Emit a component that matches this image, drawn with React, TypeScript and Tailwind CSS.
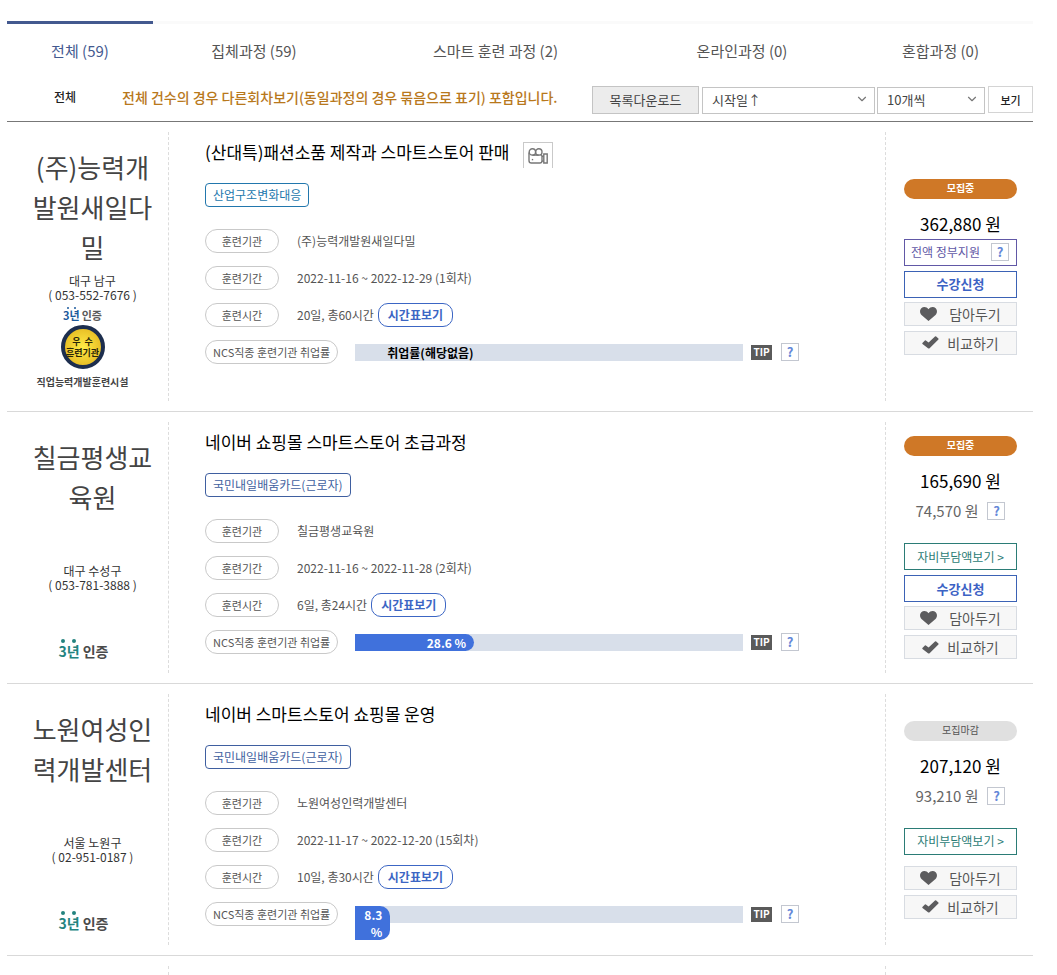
import { useState } from "react";
import { FiChevronDown } from "react-icons/fi";

type Course = {
  id: number;
  org: string;
  place: string;
  phone: string;
  title: string;
  video?: boolean;
  tag: string;
  tagTone: "sky" | "navy";
  period: string;
  hours: string;
  rate?: number;
  open: boolean;
  price: string;
  ownPrice?: string;
  excellent?: boolean;
};

const tabs = ["전체 (59)", "집체과정 (59)", "스마트 훈련 과정 (2)", "온라인과정 (0)", "혼합과정 (0)"];

const courses: Course[] = [
  {
    id: 1,
    org: "(주)능력개발원새일다밀",
    place: "대구 남구",
    phone: "( 053-552-7676 )",
    title: "(산대특)패션소품 제작과 스마트스토어 판매",
    video: true,
    tag: "산업구조변화대응",
    tagTone: "sky",
    period: "2022-11-16 ~ 2022-12-29 (1회차)",
    hours: "20일, 총60시간",
    open: true,
    price: "362,880 원",
    excellent: true,
  },
  {
    id: 2,
    org: "칠금평생교육원",
    place: "대구 수성구",
    phone: "( 053-781-3888 )",
    title: "네이버 쇼핑몰 스마트스토어 초급과정",
    tag: "국민내일배움카드(근로자)",
    tagTone: "navy",
    period: "2022-11-16 ~ 2022-11-28 (2회차)",
    hours: "6일, 총24시간",
    rate: 28.6,
    open: true,
    price: "165,690 원",
    ownPrice: "74,570 원",
  },
  {
    id: 3,
    org: "노원여성인력개발센터",
    place: "서울 노원구",
    phone: "( 02-951-0187 )",
    title: "네이버 스마트스토어 쇼핑몰 운영",
    tag: "국민내일배움카드(근로자)",
    tagTone: "navy",
    period: "2022-11-17 ~ 2022-12-20 (15회차)",
    hours: "10일, 총30시간",
    rate: 8.3,
    open: false,
    price: "207,120 원",
    ownPrice: "93,210 원",
  },
];

function HelpButton() {
  return (
    <button
      type="button"
      aria-label="도움말"
      className="flex h-[18px] w-[18px] shrink-0 items-center justify-center border border-[#c3c7d0] bg-white text-[13px] leading-4 font-bold text-[#6487d8]"
    >
      ?
    </button>
  );
}

function CameraIcon() {
  return (
    <svg viewBox="0 0 20 16" className="h-4 w-5" fill="none" stroke="#777777" strokeWidth="1.4">
      <path d="M1 4.6V12.4Q1 15 3.4 15H11.8Q14 15 14 12.8V8.4Q14 7.4 13.2 6.8" />
      <circle cx="4.4" cy="3.9" r="3.2" />
      <circle cx="10.8" cy="3.9" r="3.2" />
      <path d="M4.4 7.1H10.8" />
      <path d="M14 8.6L15.8 7.8M14 12.8L15.8 13.4" />
      <path d="M15.8 6H19.2V15H15.8Z" />
      <path d="M3.8 11.6H5.2" />
    </svg>
  );
}

function HeartIcon() {
  return (
    <svg viewBox="0 0 17 14" className="h-3.5 w-[17px]" fill="#5c5c5e">
      <path d="M8.5 14L1.5 7.9C-0.4 6 -0.4 2.9 1.3 1.3C3.2 -0.5 6.6 -0.4 8.5 2.2C10.4 -0.4 13.8 -0.5 15.7 1.3C17.4 2.9 17.4 6 15.5 7.9Z" />
    </svg>
  );
}

function CheckIcon() {
  return (
    <svg viewBox="0 0 17 13" className="h-[13px] w-[17px]" fill="#5c5c5e">
      <path d="M0.4 7L2.9 4.4Q3.4 4 3.9 4.4L6.6 6.6L13 0.4Q13.6 0 14.2 0.4L16.4 2.4Q16.9 3 16.4 3.6L7.6 12.2Q6.8 12.9 6 12.2L0.5 8.1Q0 7.5 0.4 7Z" />
    </svg>
  );
}

function Select({ label, options, className }: { label: string; options: string[]; className: string }) {
  return (
    <div className={"relative h-[27px] " + className}>
      <select
        aria-label={label}
        className="h-full w-full appearance-none border border-[#c4c4c4] bg-white pl-[9px] text-[13px] leading-5 text-[#444]"
      >
        {options.map((o) => (
          <option key={o}>{o}</option>
        ))}
      </select>
      <FiChevronDown className="pointer-events-none absolute top-1.5 right-1.5 h-3.5 w-3.5 text-[#777]" strokeWidth={2} />
    </div>
  );
}

function ExcellentMark() {
  return (
    <div className="mr-5 flex h-[89px] flex-col items-center pt-[5px] whitespace-nowrap">
      <div className="flex gap-0.5 text-[11px] leading-4 font-bold">
        <span className="relative text-[#1c5a9c]">
          3년
          <span className="absolute top-0 left-1 h-0.5 w-0.5 rounded-full bg-[#1c5a9c]" />
          <span className="absolute top-0 right-1 h-0.5 w-0.5 rounded-full bg-[#1c5a9c]" />
        </span>
        <span className="text-[#5a5a5a]">인증</span>
      </div>
      <div className="mt-0.5 flex h-11 w-11 flex-col items-center justify-center rounded-full border-4 border-[#1d2e4e] bg-radial from-[#ffec45] to-[#dfae16] text-[9px] leading-[11px] font-bold text-[#2a2608]">
        <span>우&nbsp; 수</span>
        <span>훈련기관</span>
      </div>
      <div className="mt-[5px] text-[10px] leading-4 font-bold text-[#444]">직업능력개발훈련시설</div>
    </div>
  );
}

function CertMark() {
  return (
    <div className="mr-[18px] flex h-[71px] items-end justify-center gap-[3px] pb-0.5 text-sm leading-5 font-bold whitespace-nowrap">
      <span className="relative text-[#24837f]">
        3년
        <span className="absolute -top-0.5 left-0.5 h-1 w-1 rounded-full bg-[#24837f]" />
        <span className="absolute -top-0.5 right-1 h-1 w-1 rounded-full bg-[#24837f]" />
      </span>
      <span className="text-[#4a4a4a]">인증</span>
    </div>
  );
}

function Pill({ children }: { children: string }) {
  return (
    <dt className="flex h-6 min-w-[74px] items-center justify-center rounded-full border border-[#c9c9c9] px-[7px] text-[11px] leading-4 whitespace-nowrap text-[#555]">
      {children}
    </dt>
  );
}

function Row({ label, children }: { label: string; children: React.ReactNode }) {
  return (
    <div className="flex h-6 items-center gap-[18px]">
      <Pill>{label}</Pill>
      <dd className="flex items-center gap-1 text-xs leading-4 text-[#555]">{children}</dd>
    </div>
  );
}

function CourseItem({ c }: { c: Course }) {
  return (
    <li className="flex border-b border-[#d9d9d9]">
      <div className="w-[161px] shrink-0 pt-[25px] pr-[13px] pb-5 pl-[23px] text-center">
        <h3 className="min-h-[121px] text-[26px] leading-10 break-all text-[#444]">{c.org}</h3>
        <p className="mt-1.5 text-xs leading-[14px] whitespace-nowrap text-[#333]">
          {c.place}
          <br />
          {c.phone}
        </p>
        {c.excellent ? <ExcellentMark /> : <CertMark />}
      </div>

      <div className="my-2.5 min-w-0 flex-1 border-x border-dashed border-[#dcdcdc] pt-1.5 pl-9">
        <div className="flex h-7 items-center gap-3.5">
          <a href="#course" className="text-[17px] leading-7 text-black">
            {c.title}
          </a>
          {c.video && (
            <button
              type="button"
              aria-label="동영상 보기"
              className="mt-1.5 flex h-[26px] w-[30px] items-center justify-center border border-b-0 border-[#c9c9c9]"
            >
              <CameraIcon />
            </button>
          )}
        </div>
        <span
          className={
            "mt-[17px] flex h-6 w-fit items-center rounded border px-[7px] text-xs leading-4 " +
            (c.tagTone === "sky" ? "border-[#2277ad] text-[#2277ad]" : "border-[#3f5fa0] text-[#3f5fa0]")
          }
        >
          {c.tag}
        </span>
        <dl className="mt-[22px] flex flex-col gap-[13px]">
          <Row label="훈련기관">{c.org}</Row>
          <Row label="훈련기간">{c.period}</Row>
          <Row label="훈련시간">
            {c.hours}
            <button
              type="button"
              className="h-6 rounded-[10px] border border-[#3c66c4] px-[9px] text-xs leading-4 font-bold text-[#3c66c4]"
            >
              시간표보기
            </button>
          </Row>
          <div className="flex h-6 items-center gap-[17px] pr-[86px]">
            <Pill>NCS직종 훈련기관 취업률</Pill>
            <dd className="flex min-w-0 flex-1 items-center">
              <div className="h-[17px] flex-1 bg-[#d8dfea] text-xs leading-[17px] font-bold">
                {c.rate === undefined ? (
                  <span className="pl-8 text-black">취업률(해당없음)</span>
                ) : (
                  <div
                    className="rounded-r-[10px] bg-[#4071dc] pr-2 pl-1.5 text-right text-white"
                    style={{ width: `calc(${c.rate}% + ${c.rate < 10 ? 3 : 8}px)` }}
                  >
                    {c.rate} %
                  </div>
                )}
              </div>
              <span className="mr-[9px] ml-2 flex h-[15px] w-[21px] items-center justify-center bg-[#5a5a5a] text-[10px] leading-3 font-bold text-white">
                TIP
              </span>
              <HelpButton />
            </dd>
          </div>
        </dl>
      </div>

      <div className="flex w-[147px] shrink-0 flex-col justify-center pr-4 pl-[18px] text-center">
        <span
          className={
            "h-5 rounded-full text-[10px] leading-[18px] " +
            (c.open ? "bg-[#cf7827] font-bold text-white" : "bg-[#e0e0e0] text-[#555]")
          }
        >
          {c.open ? "모집중" : "모집마감"}
        </span>
        <strong className="mt-3 text-[17px] leading-[26px] font-normal text-black">{c.price}</strong>
        {c.ownPrice ? (
          <>
            <div className="mt-[5px] flex h-6 items-center justify-center gap-[9px] text-[15px] leading-6 text-[#666]">
              {c.ownPrice}
              <HelpButton />
            </div>
            <button type="button" className="mt-5 h-[27px] border border-[#2b7c76] text-xs leading-4 text-[#2b7c76]">
              자비부담액보기 &gt;
            </button>
          </>
        ) : (
          <div className="mt-0.5 flex h-[27px] items-center justify-between border border-[#6158a6] pr-[7px] pl-1.5 text-xs leading-4 text-[#6158a6]">
            전액 정부지원
            <HelpButton />
          </div>
        )}
        {c.open && (
          <button type="button" className="mt-[5px] h-[27px] border border-[#3b62b5] text-[13px] leading-5 font-bold text-[#3b62c4]">
            수강신청
          </button>
        )}
        <button
          type="button"
          className={
            "flex h-6 items-center justify-center gap-3 border border-[#d8dce2] bg-[#f7f7f7] text-sm leading-5 text-[#555] " +
            (c.open ? "mt-1" : "mt-[11px]")
          }
        >
          <HeartIcon />
          담아두기
        </button>
        <button
          type="button"
          className="mt-[5px] flex h-6 items-center justify-center gap-2 border border-[#d8dce2] bg-[#f7f7f7] text-sm leading-5 text-[#555]"
        >
          <CheckIcon />
          비교하기
        </button>
      </div>
    </li>
  );
}

export default function App() {
  const [tab, setTab] = useState(0);
  return (
    <main className="overflow-hidden bg-white pt-[21px] pr-6 pl-[7px] font-['Noto_Sans_CJK_KR',sans-serif] text-[#444]">
      <nav className="grid grid-cols-[146fr_202fr_281fr_212fr_185fr]">
        {tabs.map((t, i) => (
          <button
            key={t}
            type="button"
            onClick={() => setTab(i)}
            className={
              "h-[57px] border-t-3 text-[15px] leading-6 " +
              (i === tab ? "border-[#43598f] text-[#43598f]" : "border-[#fafafa] text-[#555]")
            }
          >
            {t}
          </button>
        ))}
      </nav>

      <div className="mt-2 flex items-start border-b border-[#777] pb-[7px]">
        <span className="w-[115px] shrink-0 pl-[47px] text-xs leading-[22px] font-medium text-[#222]">전체</span>
        <p className="flex-1 text-sm leading-[22px] font-medium whitespace-nowrap text-[#b8781c]">
          전체 건수의 경우 다른회차보기(동일과정의 경우 묶음으로 표기) 포함입니다.
        </p>
        <div className="flex shrink-0">
          <button type="button" className="mr-[3px] h-7 w-[107px] border border-[#c4c4c4] bg-[#ececec] text-[13px] leading-5 text-[#444]">
            목록다운로드
          </button>
          <Select label="정렬" options={["시작일↑", "시작일↓"]} className="mr-0.5 w-[173px]" />
          <Select label="표시 개수" options={["10개씩", "20개씩", "50개씩"]} className="mr-[3px] w-[108px]" />
          <button type="button" className="h-[27px] w-[45px] border border-[#d4d4d4] bg-white text-[11px] leading-4 font-medium text-[#222]">
            보기
          </button>
        </div>
      </div>

      <ul>
        {courses.map((c) => (
          <CourseItem key={c.id} c={c} />
        ))}
        <li className="flex" aria-hidden="true">
          <div className="w-[161px] shrink-0" />
          <div className="mt-2.5 h-[9px] flex-1 border-x border-dashed border-[#dcdcdc]" />
          <div className="w-[147px] shrink-0" />
        </li>
      </ul>
    </main>
  );
}
